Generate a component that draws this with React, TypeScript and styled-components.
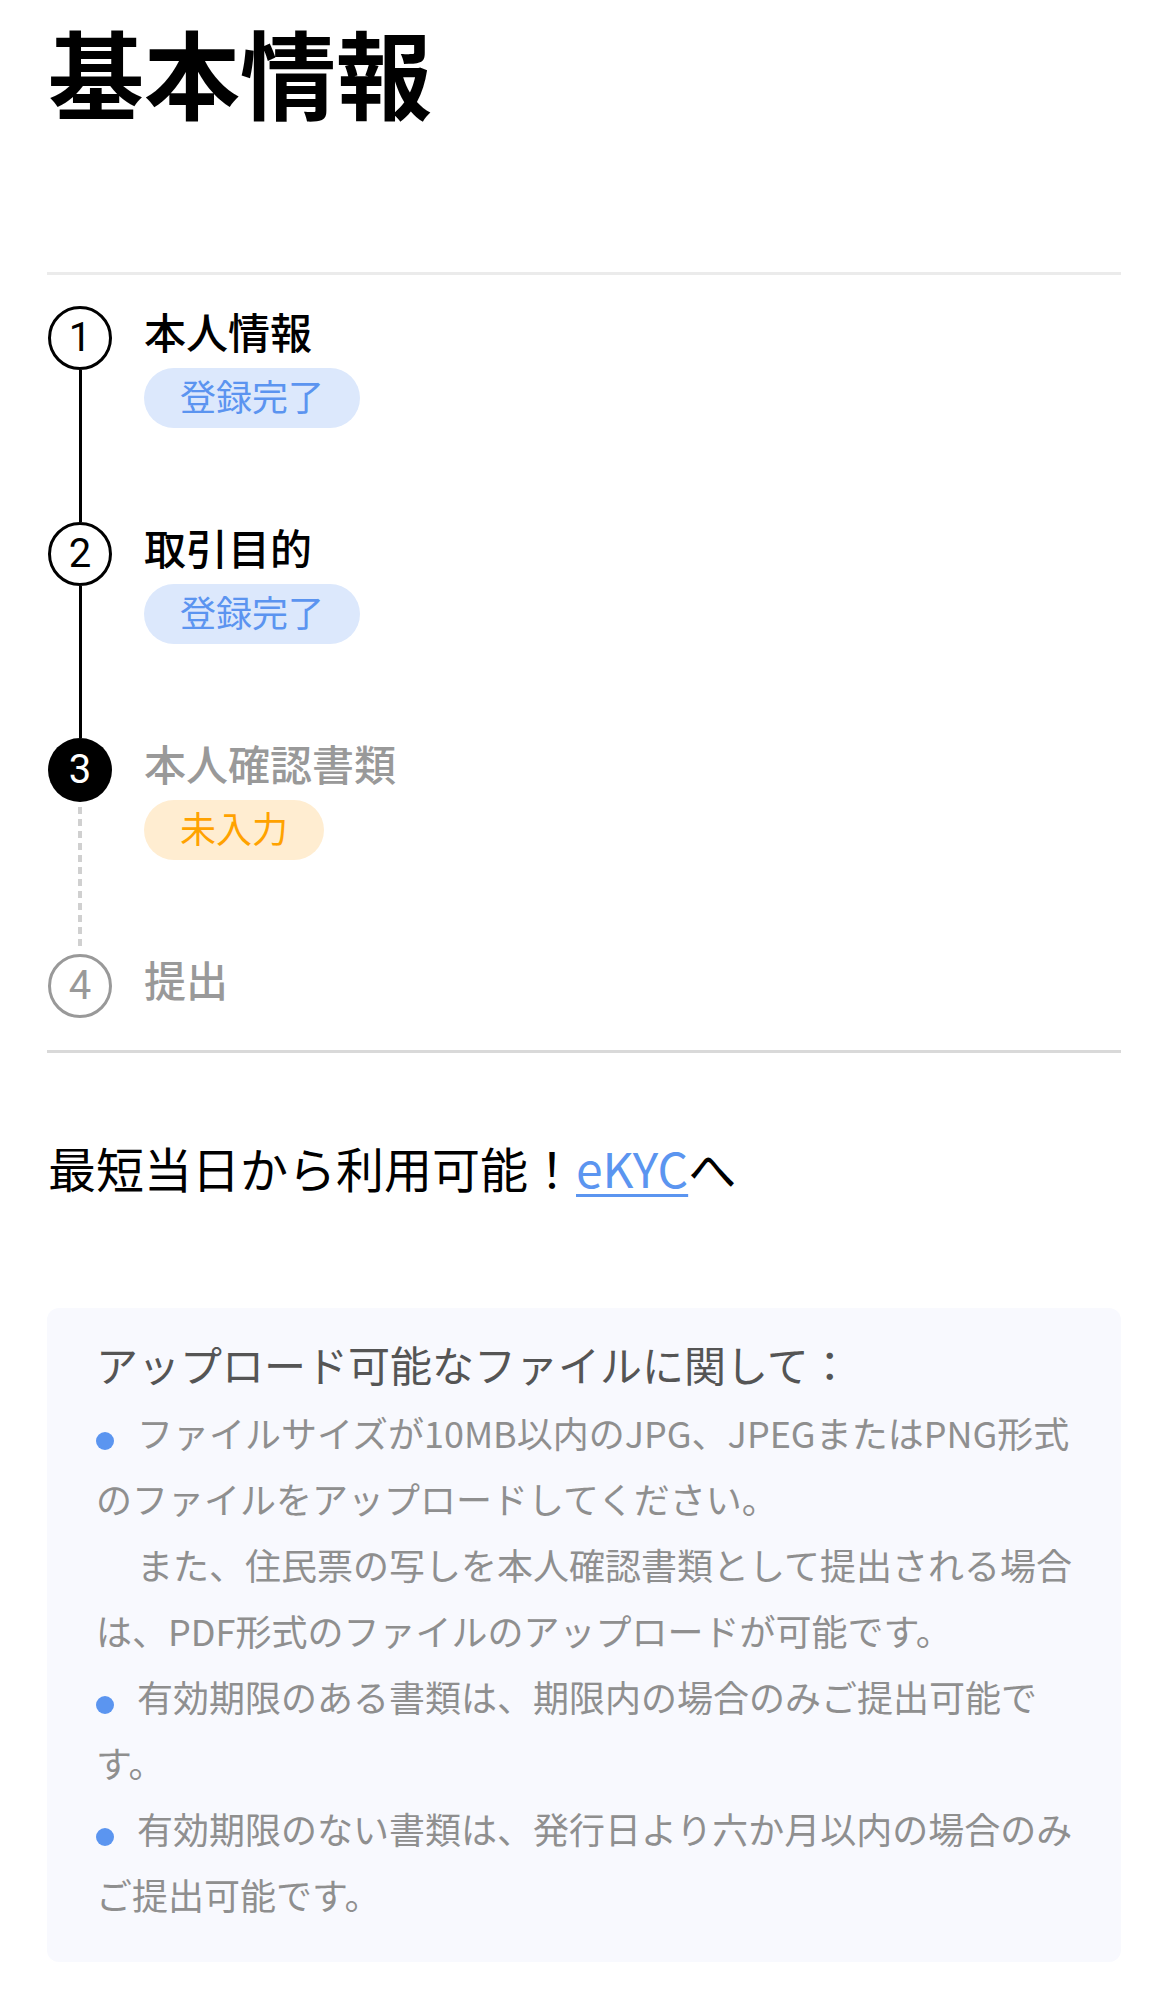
import React from "react";
import styled, { createGlobalStyle, css } from "styled-components";

const GlobalStyle = createGlobalStyle`
  * { box-sizing: border-box; }
  html, body { margin: 0; padding: 0; background: #ffffff; }
  body {
    font-family: "Noto Sans CJK JP", "Noto Sans", sans-serif;
    color: #000;
  }
`;

const Page = styled.main`
  width: 1163px;
  padding: 0 42px 46px 47px;
`;

const Title = styled.h1`
  margin: 13px 0 0 1px;
  font-size: 96px;
  line-height: 1.2;
  font-weight: 700;
  color: #000;
`;

const Divider = styled.hr<{ $tone: "light" | "mid"; $top?: number }>`
  margin: ${(p) => p.$top ?? 0}px 0 0;
  border: none;
  height: 3px;
  background: ${(p) => (p.$tone === "light" ? "#ebebeb" : "#d9d9d9")};
`;

const Steps = styled.ol`
  list-style: none;
  margin: 0;
  padding: 31px 0 32px 1px;
`;

type StepState = "done" | "current" | "todo";

const StepRow = styled.li<{ $last: boolean }>`
  display: grid;
  grid-template-columns: 64px 1fr;
  column-gap: 32px;
  min-height: ${(p) => (p.$last ? 64 : 216)}px;
`;

const Marker = styled.div`
  display: flex;
  flex-direction: column;
  align-items: center;
`;

const Circle = styled.div<{ $state: StepState }>`
  width: 64px;
  height: 64px;
  border-radius: 50%;
  display: flex;
  align-items: center;
  justify-content: center;
  font-size: 40px;
  line-height: 1;
  font-family: Roboto, "Noto Sans", sans-serif;
  flex: none;
  ${(p) =>
    p.$state === "done" &&
    css`
      border: 3px solid #000;
      color: #000;
    `}
  ${(p) =>
    p.$state === "current" &&
    css`
      background: #000;
      color: #fff;
    `}
  ${(p) =>
    p.$state === "todo" &&
    css`
      border: 3px solid #999;
      color: #999;
    `}
`;

const Connector = styled.div<{ $dashed: boolean }>`
  flex: 1;
  width: 3px;
  ${(p) =>
    p.$dashed
      ? css`
          width: 4px;
          margin: 5px 0 6px;
          background: repeating-linear-gradient(
            to bottom,
            #d0d0d0 0 7px,
            transparent 7px 12px
          );
        `
      : css`
          background: #000;
        `}
`;

const StepBody = styled.div`
  display: flex;
  flex-direction: column;
  align-items: flex-start;
`;

const StepTitle = styled.div<{ $muted: boolean }>`
  font-size: 42px;
  line-height: 50px;
  font-weight: 500;
  color: ${(p) => (p.$muted ? "#999999" : "#000000")};
`;

const Badge = styled.span<{ $kind: "done" | "pending" }>`
  margin-top: 12px;
  height: 60px;
  padding: 0 36px;
  border-radius: 30px;
  font-size: 36px;
  line-height: 54px;
  ${(p) =>
    p.$kind === "done"
      ? css`
          background: #dce8fc;
          color: #5b94f0;
        `
      : css`
          background: #ffedd1;
          color: #ffa200;
        `}
`;

const Lead = styled.p`
  margin: 78px 0 0 1px;
  font-size: 48px;
  line-height: 72px;
  color: #000;
`;

const Link = styled.a`
  color: #5b95f0;
  text-decoration: underline;
  text-decoration-thickness: 3px;
  text-underline-offset: 6px;
`;

const NoteBox = styled.section`
  margin-top: 105px;
  background: #f8f9fe;
  border-radius: 12px;
  padding: 24px 44px 35px 49px;
`;

const NoteHeading = styled.h2`
  margin: 0 0 4px;
  font-size: 42px;
  line-height: 63px;
  font-weight: 400;
  color: #555555;
`;

const NoteLine = styled.p<{ $indent?: boolean }>`
  margin: 0;
  font-size: 36px;
  line-height: 66px;
  color: #8f8f8f;
  text-indent: ${(p) => (p.$indent ? "41px" : "0")};
`;

const Dot = styled.span`
  display: inline-block;
  width: 18px;
  height: 18px;
  border-radius: 50%;
  background: #5b95f0;
  margin-right: 23px;
  vertical-align: -2px;
`;

const steps: { n: number; title: string; state: StepState; badge?: "done" | "pending" }[] = [
  { n: 1, title: "本人情報", state: "done", badge: "done" },
  { n: 2, title: "取引目的", state: "done", badge: "done" },
  { n: 3, title: "本人確認書類", state: "current", badge: "pending" },
  { n: 4, title: "提出", state: "todo" },
];

export default function App() {
  return (
    <>
      <GlobalStyle />
      <Page>
        <Title>基本情報</Title>
        <Divider $tone="light" $top={144} />
        <Steps>
          {steps.map((s, i) => {
            const last = i === steps.length - 1;
            return (
              <StepRow key={s.n} $last={last}>
                <Marker>
                  <Circle $state={s.state}>{s.n}</Circle>
                  {!last && <Connector $dashed={s.state !== "done"} />}
                </Marker>
                <StepBody>
                  <StepTitle $muted={s.state !== "done"}>{s.title}</StepTitle>
                  {s.badge && (
                    <Badge $kind={s.badge}>{s.badge === "done" ? "登録完了" : "未入力"}</Badge>
                  )}
                </StepBody>
              </StepRow>
            );
          })}
        </Steps>
        <Divider $tone="mid" />
        <Lead>
          最短当日から利用可能！<Link href="#">eKYC</Link>へ
        </Lead>
        <NoteBox>
          <NoteHeading>アップロード可能なファイルに関して：</NoteHeading>
          <NoteLine>
            <Dot />
            ファイルサイズが10MB以内のJPG、JPEGまたはPNG形式のファイルをアップロードしてください。
          </NoteLine>
          <NoteLine $indent>
            また、住民票の写しを本人確認書類として提出される場合は、PDF形式のファイルのアップロードが可能です。
          </NoteLine>
          <NoteLine>
            <Dot />
            有効期限のある書類は、期限内の場合のみご提出可能です。
          </NoteLine>
          <NoteLine>
            <Dot />
            有効期限のない書類は、発行日より六か月以内の場合のみご提出可能です。
          </NoteLine>
        </NoteBox>
      </Page>
    </>
  );
}
